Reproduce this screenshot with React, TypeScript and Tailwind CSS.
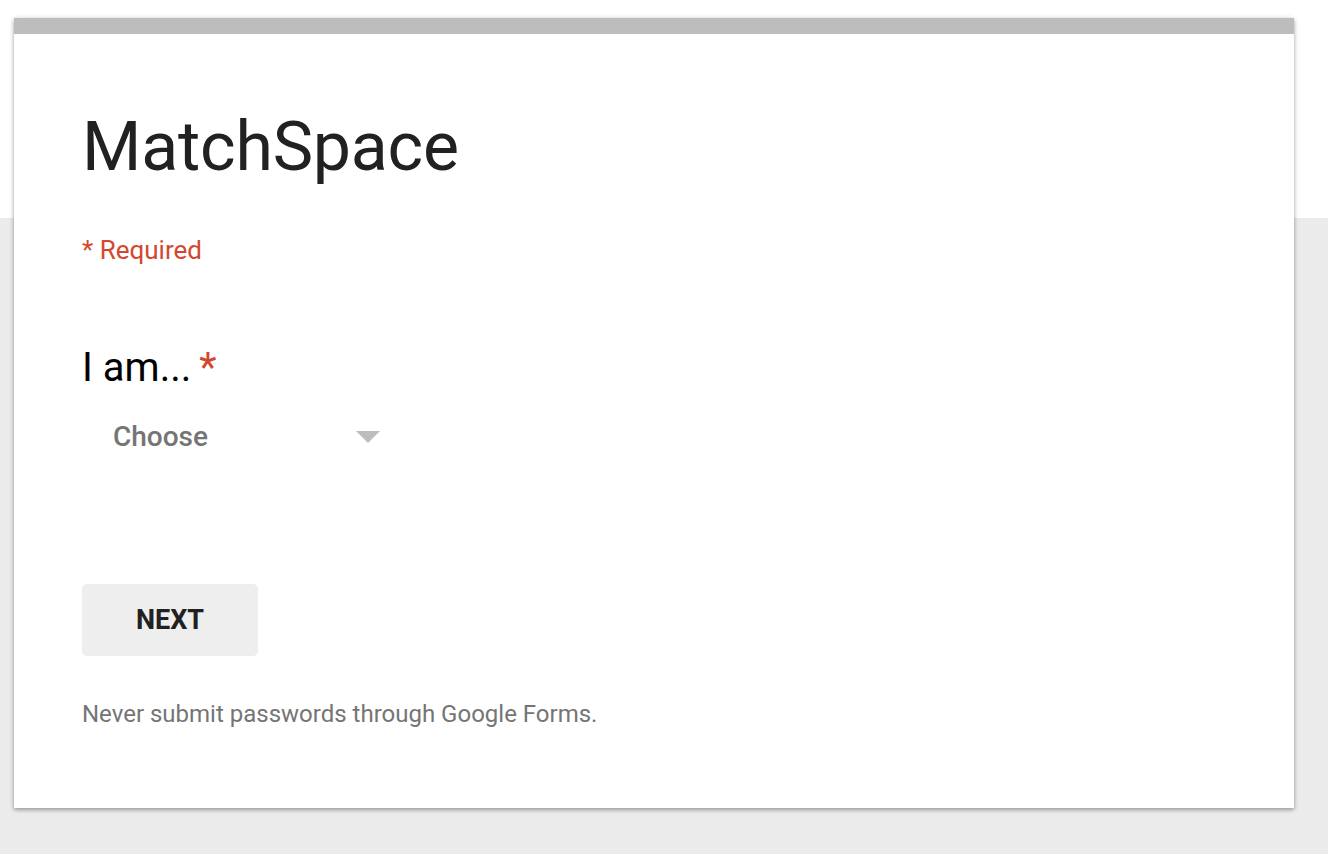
import React from "react";

export default function App() {
  return (
    <div
      className="min-h-[854px] w-full bg-[linear-gradient(to_bottom,#ffffff_0px,#ffffff_218px,#ebebeb_218px,#ebebeb_100%)] pt-[18px] pb-[46px]"
      style={{ fontFamily: "Roboto, 'Liberation Sans', sans-serif" }}
    >
      <div className="ml-[14px] w-[1280px] bg-white shadow-[0_2px_4px_rgba(0,0,0,0.3),0_0_6px_rgba(0,0,0,0.1)]">
        <div className="h-[16px] bg-[#bdbdbd]" />
        <div className="px-[68px] pt-[73px] pb-[78px]">
          <h1 className="text-[68px] leading-[80px] text-[#212121] font-normal tracking-[-0.2px]">MatchSpace</h1>
          <div className="mt-[47px] text-[26px] leading-[32px] text-[#d3472f]">* Required</div>
          <div className="mt-[78px] text-[40px] leading-[48px] text-black">
            I am...<span className="ml-[8px] text-[#d3472f]">*</span>
          </div>
          <div className="mt-[21px] flex w-[300px] items-center justify-between pl-[31px] pr-[2px] h-[48px]">
            <span className="text-[28px] leading-[48px] font-medium text-[#757575]">Choose</span>
            <svg width="24" height="12" viewBox="0 0 24 12">
              <polygon points="0,0 24,0 12,12" fill="#bdbdbd" />
            </svg>
          </div>
          <button className="mt-[123px] flex h-[72px] w-[176px] items-center justify-center rounded-[5px] bg-[#eeeeee] text-[27px] font-bold text-[#212121]">
            NEXT
          </button>
          <div className="mt-[42px] text-[24px] leading-[32px] text-[#757575]">
            Never submit passwords through Google Forms.
          </div>
        </div>
      </div>
    </div>
  );
}
